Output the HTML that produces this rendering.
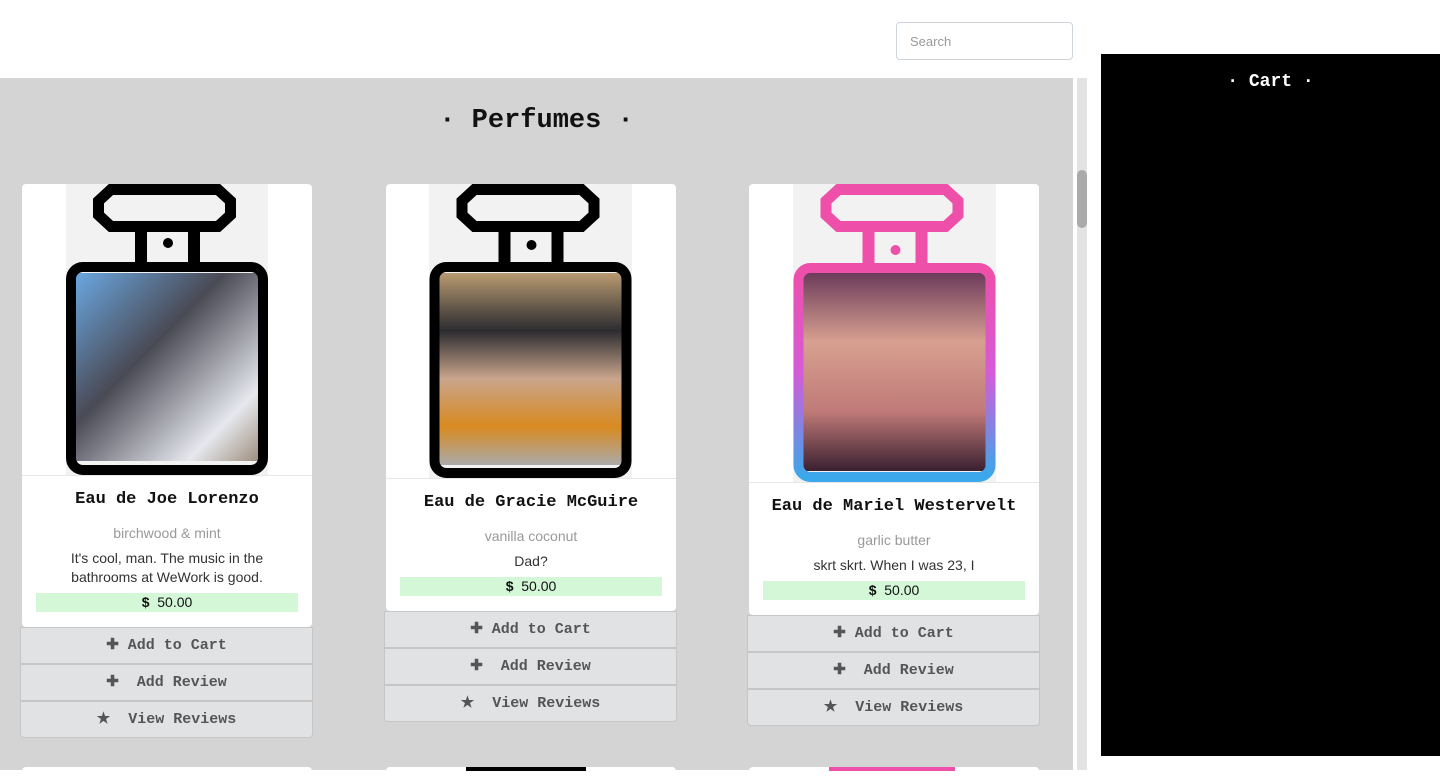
<!DOCTYPE html>
<html><head><meta charset="utf-8"><style>
*{box-sizing:border-box;margin:0;padding:0}
body{width:1440px;height:770px;overflow:hidden;background:#fff;position:relative;font-family:"Liberation Sans",sans-serif}
.search{position:absolute;left:896px;top:22px;width:177px;height:38px;border:1px solid #ced4da;border-radius:4px;padding:0 13px;font-size:13px;color:#999;line-height:38px}
.main{position:absolute;left:0;top:78px;width:1073px;height:692px;background:#d4d4d4}
.title{position:absolute;left:0;width:1073px;top:106px;text-align:center;font:bold 27px "Liberation Mono",monospace;color:#111}
.track{position:absolute;left:1077px;top:78px;width:10px;height:692px;background:#e3e3e3}
.thumb{position:absolute;left:1077px;top:170px;width:10px;height:58px;background:#aaa;border-radius:5px}
.cart{position:absolute;left:1101px;top:54px;width:339px;height:702px;background:#000;color:#fff;text-align:center;font:bold 18px "Liberation Mono",monospace;padding-top:18px}
.card{position:absolute;width:290px;background:#fff;border-radius:4px}
.img{position:absolute;background:#f2f2f2}
.body{position:absolute;left:0;width:290px;text-align:center;border-top:1px solid #e6e6e6}
.name{font:bold 17px "Liberation Mono",monospace;color:#111;margin-top:14px}
.scent{font-size:14px;color:#999;margin-top:16px}
.desc{font-size:14px;color:#333;margin-top:8px;line-height:19px;padding:0 30px}
.price{margin:6px 14px 0;background:#d4f7d8;height:19px;font-size:14px;color:#111;line-height:19px}
.btn{position:absolute;width:293px;height:37px;background:#e1e2e4;border:1px solid #c6c6c6;font:bold 15px "Liberation Mono",monospace;color:#555;text-align:center;line-height:36px}
.btn.last{border-radius:0 0 4px 4px}
.stub{position:absolute;top:767px;width:290px;height:10px;background:#fff;border-radius:4px}
</style></head><body>
<div class="search">Search</div>
<div class="main"></div>
<div class="title">· Perfumes ·</div>
<div class="track"></div><div class="thumb"></div>
<div class="cart">· Cart ·</div>

<svg width="0" height="0" style="position:absolute"><defs>
<linearGradient id="g3" x1="0" y1="0" x2="0" y2="1"><stop offset="0" stop-color="#ee4fa8"/><stop offset="0.5" stop-color="#d55bd8"/><stop offset="1" stop-color="#3aa8ea"/></linearGradient>
<linearGradient id="p1" x1="0" y1="0" x2="1" y2="1"><stop offset="0" stop-color="#6aa7e0"/><stop offset="0.4" stop-color="#4a4a55"/><stop offset="0.8" stop-color="#e6e8ee"/><stop offset="1" stop-color="#9a8a78"/></linearGradient>
<linearGradient id="p2" x1="0" y1="0" x2="0" y2="1"><stop offset="0" stop-color="#b89a70"/><stop offset="0.3" stop-color="#2c2c30"/><stop offset="0.55" stop-color="#c9a58c"/><stop offset="0.8" stop-color="#d88a20"/><stop offset="1" stop-color="#aaa"/></linearGradient>
<linearGradient id="p3" x1="0" y1="0" x2="0" y2="1"><stop offset="0" stop-color="#6a3a5a"/><stop offset="0.35" stop-color="#d7a090"/><stop offset="0.7" stop-color="#c07a78"/><stop offset="1" stop-color="#3a2030"/></linearGradient>
</defs></svg>

<!-- card 1 -->
<div class="card" style="left:22px;top:184px;height:443px"></div>
<div class="img" style="left:66px;top:184px;width:202px;height:291px">
<svg width="202" height="291" viewBox="0 0 202 291"><path d="M45 5.5H152L164.5 17V31L152 42.5H45L32.5 31V17Z" fill="none" stroke="#000" stroke-width="11"/><rect x="69" y="46" width="12" height="36"/><rect x="122" y="46" width="12" height="36"/><circle cx="102" cy="59" r="5"/><rect x="10" y="89" width="186" height="188" fill="url(#p1)"/><rect x="5" y="83" width="192" height="203" rx="12" fill="none" stroke="#000" stroke-width="10"/></svg></div>
<div class="body" style="left:22px;top:475px"><div class="name">Eau de Joe Lorenzo</div><div class="scent">birchwood &amp; mint</div><div class="desc">It's cool, man. The music in the bathrooms at WeWork is good.</div><div class="price"><b>$</b>&nbsp; 50.00</div></div>
<div class="btn" style="left:20px;top:627px">✚ Add to Cart</div>
<div class="btn" style="left:20px;top:664px">✚&nbsp; Add Review</div>
<div class="btn last" style="left:20px;top:701px">★&nbsp; View Reviews</div>

<!-- card 2 -->
<div class="card" style="left:386px;top:184px;height:427px"></div>
<div class="img" style="left:429px;top:184px;width:203px;height:294px">
<svg width="203" height="294" viewBox="0 0 202 294"><path d="M45 5.5H152L164.5 17V31L152 42.5H45L32.5 31V17Z" fill="none" stroke="#000" stroke-width="11"/><rect x="69" y="46" width="12" height="36"/><rect x="122" y="46" width="12" height="36"/><circle cx="102" cy="61" r="5"/><rect x="10" y="89" width="183" height="192" fill="url(#p2)"/><rect x="5" y="83" width="192" height="206" rx="12" fill="none" stroke="#000" stroke-width="10"/></svg></div>
<div class="body" style="left:386px;top:478px"><div class="name">Eau de Gracie McGuire</div><div class="scent">vanilla coconut</div><div class="desc">Dad?</div><div class="price"><b>$</b>&nbsp; 50.00</div></div>
<div class="btn" style="left:384px;top:611px">✚ Add to Cart</div>
<div class="btn" style="left:384px;top:648px">✚&nbsp; Add Review</div>
<div class="btn last" style="left:384px;top:685px">★&nbsp; View Reviews</div>

<!-- card 3 -->
<div class="card" style="left:749px;top:184px;height:431px"></div>
<div class="img" style="left:793px;top:184px;width:203px;height:298px">
<svg width="203" height="298" viewBox="0 0 202 298"><path d="M45 5.5H152L164.5 17V31L152 42.5H45L32.5 31V17Z" fill="none" stroke="#ee4fa8" stroke-width="11"/><rect x="69" y="46" width="12" height="38" fill="#ee4fa8"/><rect x="122" y="46" width="12" height="38" fill="#ee4fa8"/><circle cx="102" cy="66" r="5" fill="#ee4fa8"/><rect x="10" y="88" width="183" height="199" fill="url(#p3)"/><rect x="5" y="84" width="192" height="209" rx="12" fill="none" stroke="url(#g3)" stroke-width="10"/></svg></div>
<div class="body" style="left:749px;top:482px"><div class="name">Eau de Mariel Westervelt</div><div class="scent">garlic butter</div><div class="desc">skrt skrt. When I was 23, I</div><div class="price"><b>$</b>&nbsp; 50.00</div></div>
<div class="btn" style="left:747px;top:615px">✚ Add to Cart</div>
<div class="btn" style="left:747px;top:652px">✚&nbsp; Add Review</div>
<div class="btn last" style="left:747px;top:689px">★&nbsp; View Reviews</div>

<div class="stub" style="left:22px"></div>
<div class="stub" style="left:386px"><div style="margin-left:80px;width:120px;height:4px;background:#000"></div></div>
<div class="stub" style="left:749px"><div style="margin-left:80px;width:126px;height:4px;background:#ee4fa8"></div></div>
</body></html>
